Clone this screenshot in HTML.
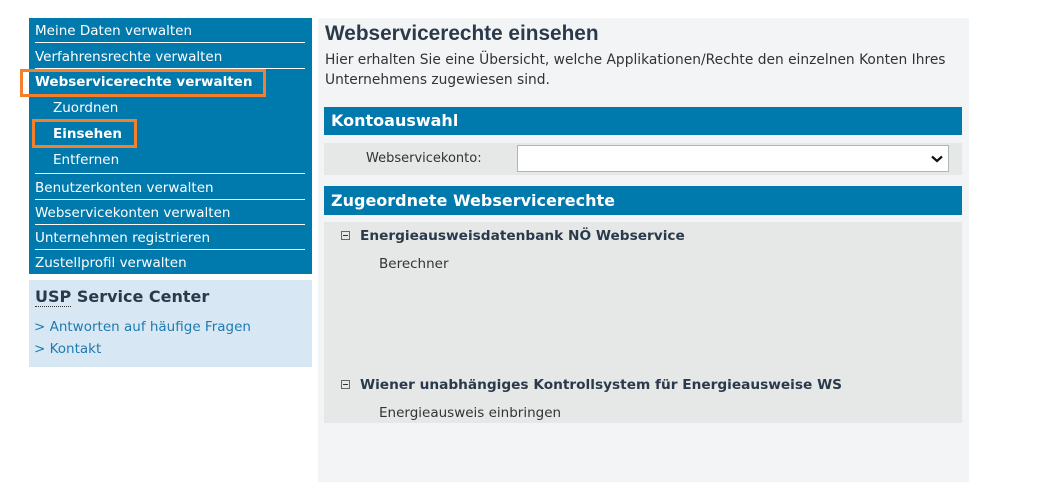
<!DOCTYPE html>
<html><head><meta charset="utf-8"><style>
*{margin:0;padding:0;box-sizing:border-box}
body{width:1058px;height:482px;background:#fff;position:relative;overflow:hidden;font-family:"DejaVu Sans",Verdana,sans-serif}
.side{position:absolute;left:29px;top:18px;width:283px;height:256px;background:#0079ad}
.it{position:absolute;left:6px;color:#fff;font-size:13.5px;white-space:nowrap}
.ln{position:absolute;left:6px;width:270px;height:1px;background:#fff}
.ob{position:absolute;border:3px solid #f57f2a}
.sc{position:absolute;left:29px;top:280px;width:283px;height:87px;background:#d7e8f4}
.main{position:absolute;left:318px;top:18px;width:651px;height:464px;background:#f3f4f5}
.bar{position:absolute;left:6px;width:638px;background:#0079ad;color:#fff;font-weight:bold;font-size:16px;padding-left:7px}
.gray{position:absolute;left:6px;width:638px;background:#e6e7e7}
.t{position:absolute;white-space:nowrap;color:#333}
.box{position:absolute;width:9px;height:9px;border:1px solid #666;}
.box:after{content:"";position:absolute;left:1px;top:3px;width:5px;height:1px;background:#333}
</style></head><body>
<div class="side">
<div class="it" style="top:5px">Meine Daten verwalten</div>
<div class="ln" style="top:24px"></div>
<div class="it" style="top:31px">Verfahrensrechte verwalten</div>
<div class="ln" style="top:50px"></div>
<div class="it" style="top:56px;font-weight:bold">Webservicerechte verwalten</div>
<div class="it" style="top:82px;left:24px">Zuordnen</div>
<div class="it" style="top:108px;left:24px;font-weight:bold">Einsehen</div>
<div class="it" style="top:134px;left:24px">Entfernen</div>
<div class="ln" style="top:155px"></div>
<div class="it" style="top:162px">Benutzerkonten verwalten</div>
<div class="ln" style="top:181px"></div>
<div class="it" style="top:187px">Webservicekonten verwalten</div>
<div class="ln" style="top:206px"></div>
<div class="it" style="top:212px">Unternehmen registrieren</div>
<div class="ln" style="top:231px"></div>
<div class="it" style="top:237px">Zustellprofil verwalten</div>
</div>
<div class="ob" style="left:20px;top:69px;width:246px;height:28px"></div>
<div class="ob" style="left:32px;top:119px;width:105px;height:29px"></div>
<div class="sc">
<div class="t" style="left:6px;top:7px;font-size:16px;font-weight:bold;color:#2b3a4a"><span style="border-bottom:1px dotted #333">USP</span> Service Center</div>
<div class="t" style="left:5px;top:39px;font-size:13.5px;color:#1f7ab0">&gt; Antworten auf häufige Fragen</div>
<div class="t" style="left:5px;top:61px;font-size:13.5px;color:#1f7ab0">&gt; Kontakt</div>
</div>
<div class="main">
<div class="t" style="left:7px;top:4px;font-family:'Liberation Sans',Arial,sans-serif;font-size:20.8px;font-weight:bold;color:#2b3a4a">Webservicerechte einsehen</div>
<div class="t" style="left:7px;top:32px;font-size:13.8px;line-height:20px;color:#333">Hier erhalten Sie eine Übersicht, welche Applikationen/Rechte den einzelnen Konten Ihres<br>Unternehmens zugewiesen sind.</div>
<div class="bar" style="top:89px;height:28px;line-height:28px">Kontoauswahl</div>
<div class="gray" style="top:125px;height:32px">
<div class="t" style="left:42px;top:8px;font-size:13px">Webservicekonto:</div>
<div style="position:absolute;left:193px;top:2px;width:432px;height:27px;background:#fff;border:1px solid #a9b8b8">
<svg style="position:absolute;right:5px;top:9px" width="12" height="8" viewBox="0 0 12 8"><path d="M1 1.5L6 6 11 1.5" fill="none" stroke="#111" stroke-width="2.2"/></svg></div>
</div>
<div class="bar" style="top:168px;height:29px;line-height:29px">Zugeordnete Webservicerechte</div>
<div class="gray" style="top:204px;height:201px">
<div class="box" style="left:17px;top:9px"></div>
<div class="t" style="left:36px;top:6px;font-size:13.7px;font-weight:bold;color:#2b3a4a">Energieausweisdatenbank NÖ Webservice</div>
<div class="t" style="left:55px;top:34px;font-size:13.5px">Berechner</div>
<div class="box" style="left:17px;top:158px"></div>
<div class="t" style="left:36px;top:155px;font-size:13.7px;font-weight:bold;color:#2b3a4a">Wiener unabhängiges Kontrollsystem für Energieausweise WS</div>
<div class="t" style="left:55px;top:183px;font-size:13.5px">Energieausweis einbringen</div>
</div>
</div>
</body></html>
